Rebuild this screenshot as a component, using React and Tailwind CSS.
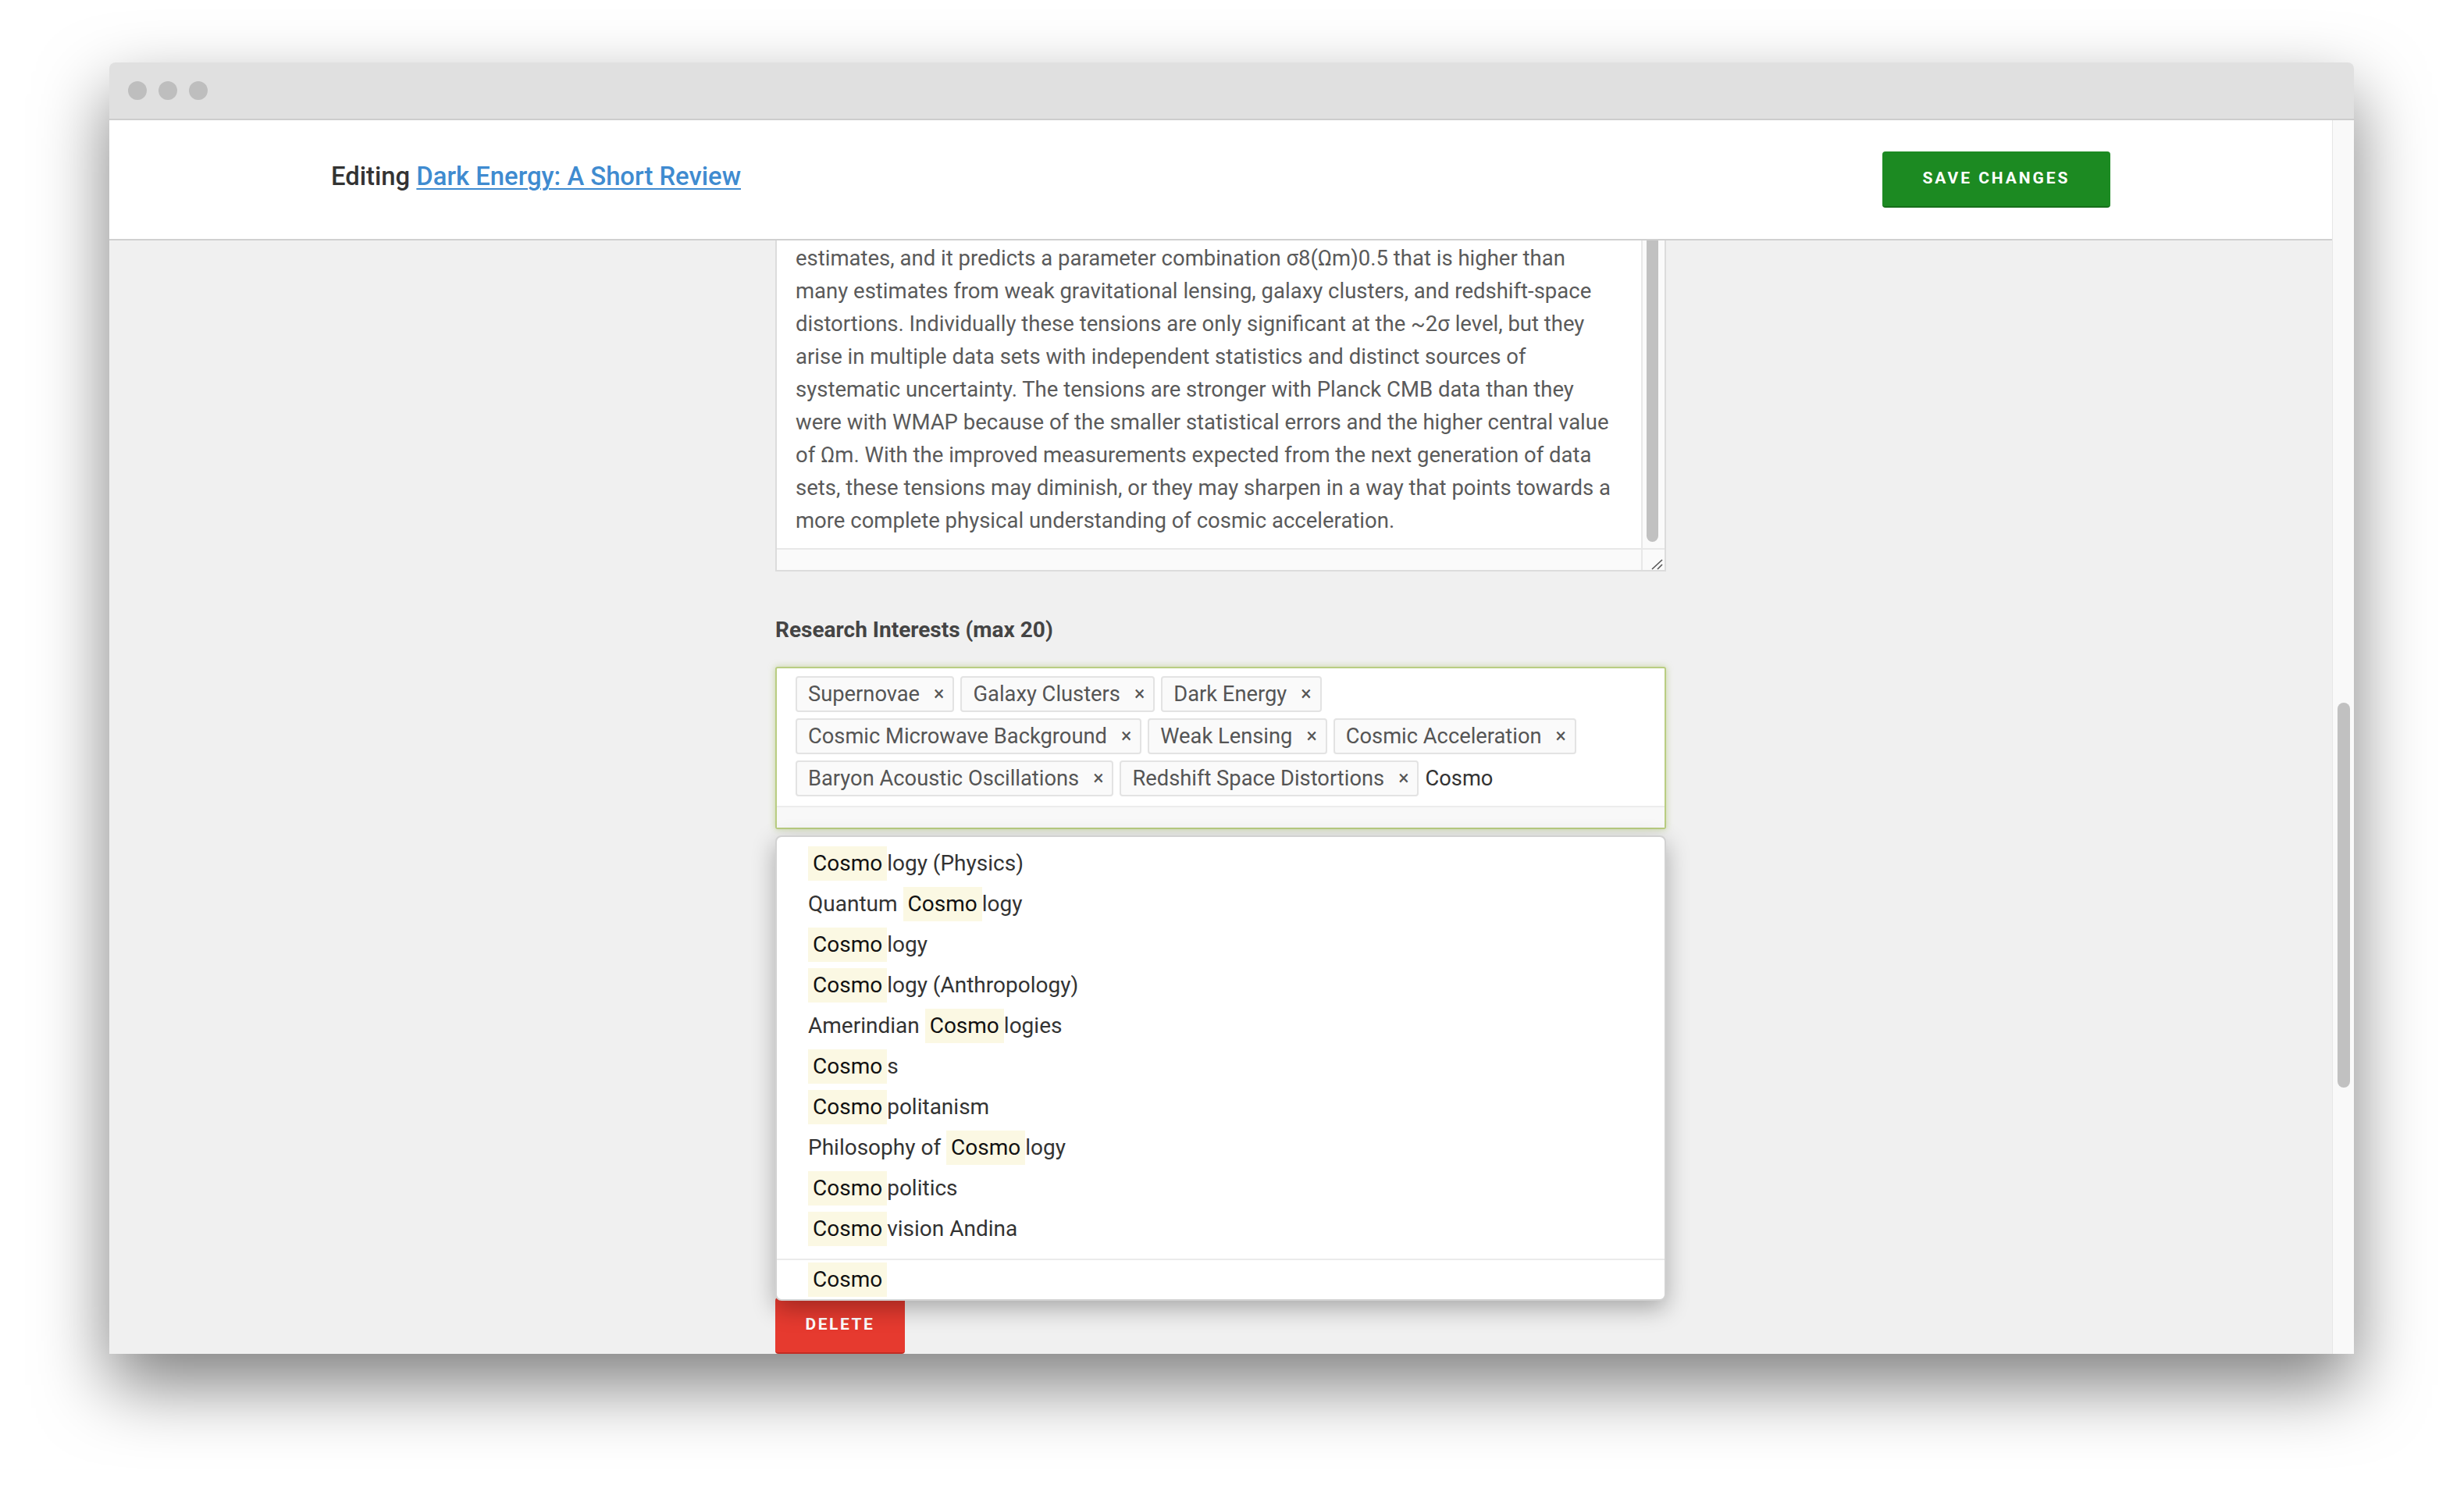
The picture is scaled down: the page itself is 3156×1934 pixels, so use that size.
const lines = [
  "estimates, and it predicts a parameter combination σ8(Ωm)0.5 that is higher than",
  "many estimates from weak gravitational lensing, galaxy clusters, and redshift-space",
  "distortions. Individually these tensions are only significant at the ~2σ level, but they",
  "arise in multiple data sets with independent statistics and distinct sources of",
  "systematic uncertainty. The tensions are stronger with Planck CMB data than they",
  "were with WMAP because of the smaller statistical errors and the higher central value",
  "of Ωm. With the improved measurements expected from the next generation of data",
  "sets, these tensions may diminish, or they may sharpen in a way that points towards a",
  "more complete physical understanding of cosmic acceleration.",
];

const tagRows = [
  "Supernovae",
  "Galaxy Clusters",
  "Dark Energy",
  "Cosmic Microwave Background",
  "Weak Lensing",
  "Cosmic Acceleration",
  "Baryon Acoustic Oscillations",
  "Redshift Space Distortions",
];

const items = [
  ["", "logy (Physics)"],
  ["Quantum ", "logy"],
  ["", "logy"],
  ["", "logy (Anthropology)"],
  ["Amerindian ", "logies"],
  ["", "s"],
  ["", "politanism"],
  ["Philosophy of ", "logy"],
  ["", "politics"],
  ["", "vision Andina"],
];

function Hi() {
  return (
    <span className="inline-flex items-center h-[44px] px-[6px] bg-[#fbf8e3] text-[#111]">Cosmo</span>
  );
}

function Tag({ label }) {
  return (
    <div className="inline-flex items-center h-[46px] pl-[14px] pr-[11px] border-2 border-[#e3e3e3] rounded-[4px] bg-[#fafafa] text-[27.3px] text-[#555] whitespace-nowrap">
      <span>{label}</span>
      <span className="ml-[18px] text-[25px] text-[#555]">×</span>
    </div>
  );
}

export default function App() {
  return (
    <div className="w-[3156px] h-[1934px] bg-white overflow-hidden pt-[80px] pl-[140px] font-['Roboto','Noto_Sans',sans-serif]">
      <div className="w-[2875px] h-[1654px] rounded-t-[8px] overflow-hidden bg-[#f0f0f0] flex flex-col shadow-[0_40px_90px_rgba(0,0,0,0.5)]">
        {/* title bar */}
        <div className="h-[74px] shrink-0 bg-[#e0e0e0] border-b-2 border-[#cdcdcd] flex items-center gap-[15px] pl-[24px]">
          <div className="w-[24px] h-[24px] rounded-full bg-[#bebebe]" />
          <div className="w-[24px] h-[24px] rounded-full bg-[#bebebe]" />
          <div className="w-[24px] h-[24px] rounded-full bg-[#bebebe]" />
        </div>
        <div className="flex-1 flex min-h-0">
          <div className="flex-1 flex flex-col min-w-0">
            {/* header */}
            <div className="h-[154px] shrink-0 bg-white border-b-2 border-[#d0d0d0]">
              <div className="w-[2279px] mx-auto h-full flex items-center justify-between">
                <div className="mb-[6px] text-[32.8px] font-medium text-[#333]">
                  Editing{" "}
                  <a className="text-[#3f8bd0] underline decoration-2 underline-offset-[4px]">Dark Energy: A Short Review</a>
                </div>
                <button className="w-[292px] h-[72px] bg-[#1c8a22] rounded-[4px] border-b-2 border-[#176e1b] text-white text-[21px] font-bold tracking-[0.14em]">
                  SAVE CHANGES
                </button>
              </div>
            </div>
            {/* content */}
            <div className="flex-1 min-h-0 overflow-hidden">
              <div className="w-[1141px] mx-auto relative">
                {/* textarea */}
                <div className="bg-white border-x-2 border-b-2 border-[#dcdcdc]">
                  <div className="flex h-[394px]">
                    <div className="flex-1 pl-[24px] pt-[2px] text-[27.5px] leading-[42px] text-[#5a5a5a]">
                      {lines.map((l, i) => (
                        <div key={i} className="whitespace-nowrap">{l}</div>
                      ))}
                    </div>
                    <div className="w-[30px] shrink-0 bg-[#fafafa] border-l-2 border-[#e8e8e8]">
                      <div className="ml-[5px] w-[15px] h-[386px] rounded-b-full bg-[#c1c1c1]" />
                    </div>
                  </div>
                  <div className="flex h-[28px] border-t-2 border-[#e8e8e8] bg-[#fafafa]">
                    <div className="flex-1" />
                    <div className="w-[30px] shrink-0 border-l-2 border-[#e8e8e8] relative">
                      <svg className="absolute right-0 bottom-0" width="28" height="26" viewBox="0 0 28 26">
                        <line x1="12" y1="25" x2="25" y2="13" stroke="#555" strokeWidth="1.6" />
                        <line x1="19" y1="25" x2="25" y2="19" stroke="#555" strokeWidth="1.6" />
                      </svg>
                    </div>
                  </div>
                </div>

                {/* label */}
                <div className="mt-[57px] text-[28px] leading-[36px] font-bold text-[#444]">Research Interests (max 20)</div>

                {/* tag box */}
                <div className="mt-[29px] bg-white border-2 border-[#b9cd82] rounded-[3px] shadow-[0_0_8px_rgba(160,190,90,0.55)]">
                  <div className="flex flex-wrap gap-[8px] pl-[24px] pr-[24px] pt-[10px] pb-[12px]">
                    {tagRows.map((t) => (
                      <Tag key={t} label={t} />
                    ))}
                    <div className="h-[46px] flex items-center text-[27.3px] text-[#333]">Cosmo</div>
                  </div>
                  <div className="h-[28px] border-t-2 border-[#ececec] bg-[#f8f8f8]" />
                </div>

                {/* delete */}
                <button className="mt-[600px] w-[166px] h-[72px] bg-[#e63a2f] rounded-[4px] border-b-2 border-[#c22d24] text-white text-[21px] font-bold tracking-[0.12em]">
                  DELETE
                </button>

                {/* dropdown */}
                <div className="absolute left-0 top-[762px] w-[1141px] bg-white border-2 border-[#d2d2d2] rounded-[8px] shadow-[0_10px_30px_rgba(0,0,0,0.3)] z-10 text-[28px] text-[#333]">
                  <div className="pt-[8px] pb-[12px]">
                    {items.map(([pre, post], i) => (
                      <div key={i} className="h-[52px] pl-[40px] flex items-center whitespace-pre">
                        {pre}
                        <Hi />
                        {post}
                      </div>
                    ))}
                  </div>
                  <div className="h-[52px] border-t-2 border-[#ebebeb] pl-[40px] flex items-center">
                    <Hi />
                  </div>
                </div>
              </div>
            </div>
          </div>
          {/* page scrollbar */}
          <div className="w-[28px] shrink-0 bg-[#f9f9f9] border-l border-[#e6e6e6]">
            <div className="mt-[746px] ml-[6px] w-[16px] h-[493px] rounded-full bg-[#c1c1c1]" />
          </div>
        </div>
      </div>
    </div>
  );
}
